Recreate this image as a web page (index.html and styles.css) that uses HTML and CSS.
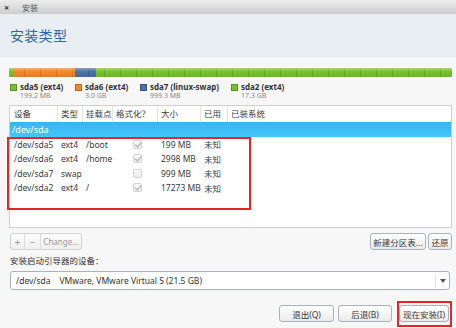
FILE: index.html
```html
<!DOCTYPE html>
<html>
<head>
<meta charset="utf-8">
<link rel="stylesheet" href="styles.css">
</head>
<body>
<div class="window">
  <div class="titlebar"><span class="close">×</span><span class="wtitle">安装</span></div>
  <div class="header"><h1 class="title">安装类型</h1></div>
  <div class="main">
    <div class="pbar">
      <div class="seg green" style="width:4px"></div>
      <div class="seg orange" style="width:62px"></div>
      <div class="seg blue" style="width:21px"></div>
      <div class="seg green grow"></div>
    </div>
    <div class="legend">
      <div class="litem"><span class="sq green"></span><div><div class="lname">sda5 (ext4)</div><div class="lsize">199.2 MB</div></div></div>
      <div class="litem"><span class="sq orange"></span><div><div class="lname">sda6 (ext4)</div><div class="lsize">3.0 GB</div></div></div>
      <div class="litem"><span class="sq blue"></span><div><div class="lname">sda7 (linux-swap)</div><div class="lsize">999.3 MB</div></div></div>
      <div class="litem"><span class="sq green"></span><div><div class="lname">sda2 (ext4)</div><div class="lsize">17.3 GB</div></div></div>
    </div>
    <div class="table">
      <div class="row head">
        <div class="c c1">设备</div><div class="c">类型</div><div class="c">挂载点</div><div class="c">格式化？</div><div class="c">大小</div><div class="c">已用</div><div class="c last">已装系统</div>
      </div>
      <div class="row sel"><div class="c c1 selname">/dev/sda</div></div>
      <div class="row"><div class="c c1">/dev/sda5</div><div class="c">ext4</div><div class="c">/boot</div><div class="c chk"><span class="cb on"></span></div><div class="c">199 MB</div><div class="c">未知</div><div class="c"></div></div>
      <div class="row"><div class="c c1">/dev/sda6</div><div class="c">ext4</div><div class="c">/home</div><div class="c chk"><span class="cb on"></span></div><div class="c">2998 MB</div><div class="c">未知</div><div class="c"></div></div>
      <div class="row"><div class="c c1">/dev/sda7</div><div class="c">swap</div><div class="c"></div><div class="c chk"><span class="cb"></span></div><div class="c">999 MB</div><div class="c">未知</div><div class="c"></div></div>
      <div class="row"><div class="c c1">/dev/sda2</div><div class="c">ext4</div><div class="c">/</div><div class="c chk"><span class="cb on"></span></div><div class="c">17273 MB</div><div class="c">未知</div><div class="c"></div></div>
      <div class="mark"></div>
    </div>
    <div class="tools">
      <div class="group"><span class="gb plus">+</span><span class="gb minus">−</span><span class="gb change">Change...</span></div>
      <div class="rbtns"><span class="btn newtab">新建分区表...</span><span class="btn revert">还原</span></div>
    </div>
    <div class="label">安装启动引导器的设备：</div>
    <div class="combo"><span class="ctext">/dev/sda&nbsp;&nbsp;&nbsp;&nbsp;VMware, VMware Virtual S (21.5 GB)</span><span class="arrow"></span></div>
    <div class="actions">
      <span class="btn quit">退出(Q)</span>
      <span class="btn back">后退(B)</span>
      <span class="btn install">现在安装(I)</span>
    </div>
  </div>
</div>
</body>
</html>
```
FILE: styles.css
```css
* { box-sizing: border-box; }
html, body { margin: 0; padding: 0; }
body {
  width: 456px; height: 328px; overflow: hidden;
  font-family: "Noto Sans", "Noto Sans CJK SC", sans-serif;
  font-size: 8.5px; color: #3c3c3c;
  background: #f7f7f7;
}
.window { width: 456px; height: 328px; display: flex; flex-direction: column; }
.titlebar {
  height: 14px; display: flex; align-items: center;
  background: linear-gradient(#ececec, #cdcdcd);
  color: #4a4a4a; font-size: 8px; padding-left: 4px;
}
.close { font-size: 9px; width: 18px; font-weight: bold; color: #333; }
.wtitle { color: #555; }
.header { height: 43px; background: #e9eef2; padding: 14px 0 0 10px; }
.title { margin: 0; font-weight: normal; font-size: 14px; line-height: 16px; color: #2f68a6; letter-spacing: 0.3px; }
.main { flex: 1; padding: 11px 4px 0 9px; display: flex; flex-direction: column; }
.pbar {
  height: 9px; display: flex; border-radius: 1px; overflow: hidden;
  position: relative;
}
.pbar::after {
  content: ""; position: absolute; inset: 0;
  background:
    linear-gradient(rgba(255,255,255,0.35), rgba(255,255,255,0) 40%, rgba(0,0,0,0.08)),
    repeating-linear-gradient(90deg, transparent 0 15px, rgba(0,0,0,0.12) 15px 16px);
}
.seg { height: 100%; }
.seg.grow { flex: 1; }
.green { background: #76c22e; }
.orange { background: #f2892a; }
.blue { background: #4a72a6; }
.legend {
  display: grid; grid-template-columns: 65px 65px 91px auto;
  margin-top: 5px; height: 16px; padding-left: 1px;
}
.litem { display: flex; align-items: flex-start; gap: 3px; }
.sq { width: 7px; height: 7px; margin-top: 2px; border: 1px solid rgba(0,0,0,0.25); }
.lname { font-weight: bold; font-size: 8px; line-height: 10px; color: #333; }
.lsize { font-size: 7px; line-height: 8px; color: #888; }
.table {
  position: relative; margin-top: 7px; height: 123px;
  background: #fff; border: 1px solid #cfcfcf;
}
.row {
  display: grid;
  grid-template-columns: 48px 25px 30px 45px 43px 27px 1fr;
  height: 14.5px; align-items: center;
}
.row.head { height: 16px; }
.head .c { border-right: 1px solid #e4e4e4; height: 16px; line-height: 16px; }
.head .c.last { border-right: 0; }
.c { padding-left: 3px; white-space: nowrap; overflow: visible; }
.c1 { padding-left: 4px; }
.row.sel {
  height: 15px; background: linear-gradient(#34b6ef, #45c6fa);
  color: #fff; grid-template-columns: 1fr;
}
.selname { padding-left: 2px; font-size: 9px; }
.chk { padding-left: 20px; display: flex; align-items: center; }
.cb {
  width: 9px; height: 9px; border: 1px solid #d4d4d4; border-radius: 2px;
  background: linear-gradient(#fafafa, #ececec); position: relative;
}
.cb.on::after {
  content: ""; position: absolute; left: 2px; top: 0px; width: 3px; height: 5px;
  border-right: 1px solid #a8a8a8; border-bottom: 1px solid #a8a8a8;
  transform: rotate(40deg);
}
.mark {
  position: absolute; left: -3px; top: 31px; width: 244px; height: 73px;
  border: 2px solid #e4262a;
}
.tools { margin-top: 5px; height: 17px; display: flex; justify-content: space-between; padding-left: 1px; }
.group { display: flex; border: 1px solid #cfd3d6; border-radius: 3px; background: linear-gradient(#fcfcfc, #f0f0f0); height: 17px; }
.gb { display: flex; align-items: center; justify-content: center; color: #999; border-right: 1px solid #dcdcdc; }
.gb:last-child { border-right: 0; }
.plus { width: 14px; font-size: 10px; }
.minus { width: 16px; font-size: 10px; }
.change { width: 40px; font-size: 8px; }
.rbtns { display: flex; gap: 2px; }
.btn {
  display: flex; align-items: center; justify-content: center;
  border: 1px solid #a6b3bf; border-radius: 3px;
  background: linear-gradient(#ffffff, #ebebeb);
  height: 17px; color: #3a3a3a; font-size: 8.5px; white-space: nowrap;
}
.newtab { width: 56px; }
.revert { width: 24px; }
.label { margin-top: 5px; height: 12px; line-height: 12px; padding-left: 1px; color: #333; }
.combo {
  margin-top: 4px; height: 19px; margin-left: 1px; margin-right: 2px;
  border: 1px solid #aab3bc; border-radius: 3px; background: #fff;
  display: flex; align-items: center; justify-content: space-between;
}
.ctext { padding-left: 5px; color: #333; }
.arrow {
  width: 14px; height: 13px; border-left: 1px solid #e2e2e2; position: relative;
}
.arrow::after {
  content: ""; position: absolute; left: 4px; top: 5px;
  border-left: 3px solid transparent; border-right: 3px solid transparent; border-top: 4px solid #555;
}
.actions { margin-top: 15px; display: flex; justify-content: flex-end; padding-right: 3px; }
.quit { width: 55px; margin-right: 4px; }
.back { width: 54px; margin-right: 7px; }
.install { width: 50px; position: relative; justify-content: flex-start; padding-left: 3px; overflow: visible; }
.install::after {
  content: ""; position: absolute; left: -3px; top: -5px; width: 51px; height: 22px;
  border: 2px solid #e4262a;
}
```
